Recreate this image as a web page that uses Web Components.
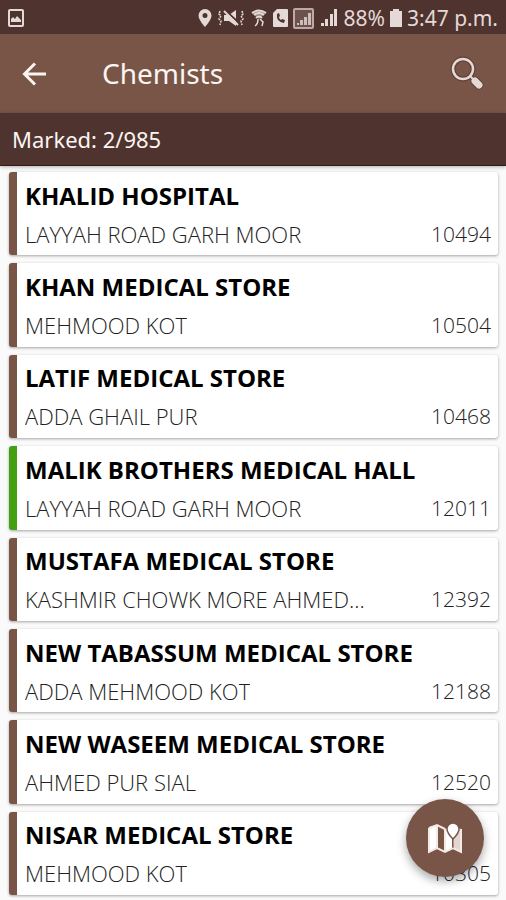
<!DOCTYPE html>
<html lang="en">
<head>
<meta charset="utf-8">
<meta name="viewport" content="width=device-width, initial-scale=1">
<title>Chemists</title>
<style>
  html {
    --bar: #795548;
    --bar-dark: #4f332f;
    --marked: #43a012;
  }
  body {
    margin: 0;
    background: #fafafa;
    font-family: "Noto Sans", "Open Sans", sans-serif;
  }
</style>
</head>
<body>
<chemist-app></chemist-app>

<script>
(function () {
  function define(name, html, setup) {
    var template = document.createElement('template');
    template.innerHTML = html;

    window.customElements.define(name, class extends HTMLElement {
      constructor() {
        super();
        this.attachShadow({ mode: 'open' });
        this.shadowRoot.appendChild(template.content.cloneNode(true));
      }

      connectedCallback() {
        if (setup) setup(this, this.shadowRoot);
      }
    });
  }

  define('status-bar', `
    <style>
      :host {
        display: flex;
        align-items: center;
        justify-content: space-between;
        height: 34px;
        padding: 2px 8px 0;
        box-sizing: border-box;
        background: var(--bar-dark);
        color: #e4d9d6;
        font-size: 21px;
        line-height: 32px;
        white-space: nowrap;
      }
      .right { display: flex; align-items: center; gap: 5px; }
      svg { display: block; flex: none; }
    </style>
    <svg width="16" height="18" viewBox="0 0 16 18" fill="none">
      <rect x="1" y="1" width="14" height="16" rx="1" stroke="currentColor" stroke-width="2"/>
      <path d="M3 13V10l2-2 2 2 2-3 4 4v2z" fill="currentColor"/>
    </svg>
    <div class="right">
      <svg width="14" height="18" viewBox="0 0 14 18" fill="currentColor">
        <path fill-rule="evenodd" d="M7 0a6.500 6.500 0 0 0-6.500 6.500C.5 11 7 18 7 18s6.500-7 6.500-11.500A6.500 6.500 0 0 0 7 0zm0 4a2.500 2.500 0 1 1 0 5 2.500 2.500 0 0 1 0-5z"/>
      </svg>
      <svg width="28" height="18" viewBox="0 0 28 18">
        <path d="M7 6h5l7-5v16l-7-5H7z" fill="currentColor"/>
        <path d="M9 2l13 12" stroke="var(--bar-dark)" stroke-width="2"/>
        <path d="M7 2l14 14" stroke="currentColor" stroke-width="2"/>
        <path d="M3 2l-1 3 2 2-2 3 2 2-1 4M25 2l1 3-2 2 2 3-2 2 1 4" fill="none" stroke="currentColor" stroke-width="1.500" stroke-dasharray="2 1"/>
      </svg>
      <svg width="18" height="18" viewBox="0 0 18 18" fill="none" stroke="currentColor">
        <path d="M2 4q7-5 14 0L9 10z" fill="currentColor" stroke="none" opacity=".5"/>
        <path d="M2 4q7-5 14 0M4 6q5-4 10 0M6 9q3-3 6 0" stroke-width="2"/>
        <path d="M8 10q0 5-3 7M10 10l3 3-1 4" stroke-width="1.500"/>
      </svg>
      <svg width="15" height="18" viewBox="0 0 15 18">
        <path d="M4 0h10q1 0 1 1v16q0 1-1 1H1q-1 0-1-1V4z" fill="currentColor"/>
        <path d="M4 5q-1 8 7 9l1-3-3-1-1 1q-2-1-2-3l1-1-1-3z" fill="var(--bar-dark)"/>
      </svg>
      <svg width="21" height="21" viewBox="0 0 21 21">
        <rect x="1" y="1" width="19" height="19" rx="1" fill="#6d514d" stroke="#bdaaa6" stroke-width="2"/>
        <path d="M4 17v-2h2v2zM7 17v-5h3v5zM11 17V9h3v8zM15 17V5h3v12z" fill="currentColor" opacity=".8"/>
      </svg>
      <svg width="20" height="20" viewBox="0 0 20 20" fill="currentColor">
        <path d="M2 18v-3h3v3zM6 18v-7h3v7zM11 18V6h3v12zM15 18V1h3v17z"/>
      </svg>
      <span>88%</span>
      <svg width="12" height="18" viewBox="0 0 12 18" fill="currentColor">
        <path d="M3 0h6v2h3v16H0V2h3z"/>
      </svg>
      <span>3:47 p.m.</span>
    </div>
  `);

  define('app-bar', `
    <style>
      :host {
        display: flex;
        align-items: center;
        height: 79px;
        padding: 0 20px;
        background: var(--bar);
        color: #fbf5f2;
      }
      h1 {
        flex: 1;
        margin: 0 0 0 52px;
        padding-bottom: 2px;
        font-size: 28px;
        font-weight: 400;
        line-height: 38px;
      }
      button {
        display: flex;
        padding: 0;
        border: 0;
        background: none;
        color: inherit;
        cursor: pointer;
      }
    </style>
    <button type="button" aria-label="Back">
      <svg width="30" height="30" viewBox="0 0 30 30" fill="none" stroke="currentColor" stroke-width="3">
        <path d="M26 15H5M15 4.500L4.500 15 15 25.500"/>
      </svg>
    </button>
    <h1><slot></slot></h1>
    <button type="button" aria-label="Search">
      <svg width="36" height="36" viewBox="0 0 36 36" fill="none">
        <g stroke="#4f332f" opacity=".6">
          <circle cx="13" cy="13" r="10" stroke-width="5"/>
          <path d="M20 20l4 4" stroke-width="4"/>
          <path d="M25 25l4 4" stroke-width="9" stroke-linecap="round"/>
        </g>
        <g stroke="#e6d8d3">
          <circle cx="13" cy="13" r="10" stroke-width="2.500"/>
          <path d="M20 20l4 4" stroke-width="2"/>
          <path d="M25 25l4 4" stroke-width="7" stroke-linecap="round"/>
        </g>
      </svg>
    </button>
  `);

  define('marked-count', `
    <style>
      :host {
        display: block;
        padding: 8px 12px;
        background: var(--bar-dark);
        border-bottom: 1px solid #3a1614;
        box-shadow: 0 1px 4px rgba(0, 0, 0, 0.3);
        color: #fbf5f2;
        font-size: 22px;
        line-height: 36px;
      }
    </style>
    <slot></slot>
  `);

  define('chemist-card', `
    <style>
      :host {
        display: flex;
        flex-direction: column;
        justify-content: center;
        box-sizing: border-box;
        min-height: 83px;
        padding: 2px 7px 0 8px;
        border-left: 8px solid var(--bar);
        border-radius: 3px;
        background: #fff;
        box-shadow: 0 1px 3px rgba(0, 0, 0, 0.35);
        font-family: "Open Sans", "Noto Sans", sans-serif;
      }
      :host([marked]) { border-left-color: var(--marked); }
      h2 {
        margin: 0;
        color: #000;
        font-size: 24px;
        font-weight: 700;
        line-height: 38px;
      }
      .row {
        display: flex;
        justify-content: space-between;
        gap: 16px;
        color: #222;
        font-size: 22px;
        font-weight: 300;
        line-height: 38px;
      }
      .place {
        overflow: hidden;
        white-space: nowrap;
        text-overflow: ellipsis;
      }
      .code { font-size: 21px; }
    </style>
    <h2><slot></slot></h2>
    <div class="row">
      <span class="place"><slot name="place"></slot></span>
      <span class="code"><slot name="code"></slot></span>
    </div>
  `);

  define('map-button', `
    <style>
      :host { display: block; position: fixed; right: 22px; bottom: 23px; }
      button {
        display: flex;
        align-items: center;
        justify-content: center;
        width: 78px;
        height: 78px;
        padding: 0;
        border: 0;
        border-radius: 50%;
        background: var(--bar);
        box-shadow: 0 4px 10px rgba(0, 0, 0, 0.35);
        cursor: pointer;
      }
    </style>
    <button type="button" aria-label="Show on map">
      <svg width="36" height="32" viewBox="0 0 36 32">
        <path d="M2 6l8-3v23l-8 4zM18 7l7-3v22l-7 4z" fill="#fff"/>
        <path d="M26 4l8 3v23l-8-4z" fill="#e3d5cf"/>
        <path d="M2 6l8-3 8 4M34 7v23l-8-4-8 4-8-4-8 4V6M10 3v23M18 7v23" fill="none" stroke="#f3e9e5" stroke-width="2"/>
        <path d="M26 17s-6-6-6-10a6 6 0 0 1 12 0c0 4-6 10-6 10z" fill="#fff" stroke="#795548" stroke-width="1.500"/>
        <path d="M26 17v9" stroke="#795548" stroke-width="1"/>
      </svg>
    </button>
  `);

  var chemists = [
    ['KHALID HOSPITAL', 'LAYYAH ROAD GARH MOOR', '10494'],
    ['KHAN MEDICAL STORE', 'MEHMOOD KOT', '10504'],
    ['LATIF MEDICAL STORE', 'ADDA GHAIL PUR', '10468'],
    ['MALIK BROTHERS MEDICAL HALL', 'LAYYAH ROAD GARH MOOR', '12011', true],
    ['MUSTAFA MEDICAL STORE', 'KASHMIR CHOWK MORE AHMED...', '12392'],
    ['NEW TABASSUM MEDICAL STORE', 'ADDA MEHMOOD KOT', '12188'],
    ['NEW WASEEM MEDICAL STORE', 'AHMED PUR SIAL', '12520'],
    ['NISAR MEDICAL STORE', 'MEHMOOD KOT', '10305']
  ];

  define('chemist-app', `
    <style>
      :host { display: flex; flex-direction: column; min-height: 100vh; }
      main {
        flex: 1;
        display: grid;
        grid-auto-rows: 1fr;
        gap: 8px;
        padding: 6px 8px 5px 9px;
      }
    </style>
    <status-bar></status-bar>
    <app-bar>Chemists</app-bar>
    <marked-count>Marked: 2/985</marked-count>
    <main></main>
    <map-button></map-button>
  `, function (host, root) {
    root.querySelector('main').innerHTML = chemists.map(function (c) {
      return `<chemist-card${c[3] ? ' marked' : ''}>${c[0]}<span slot="place">${c[1]}</span><span slot="code">${c[2]}</span></chemist-card>`;
    }).join('');
  });
})();
</script>
</body>
</html>
